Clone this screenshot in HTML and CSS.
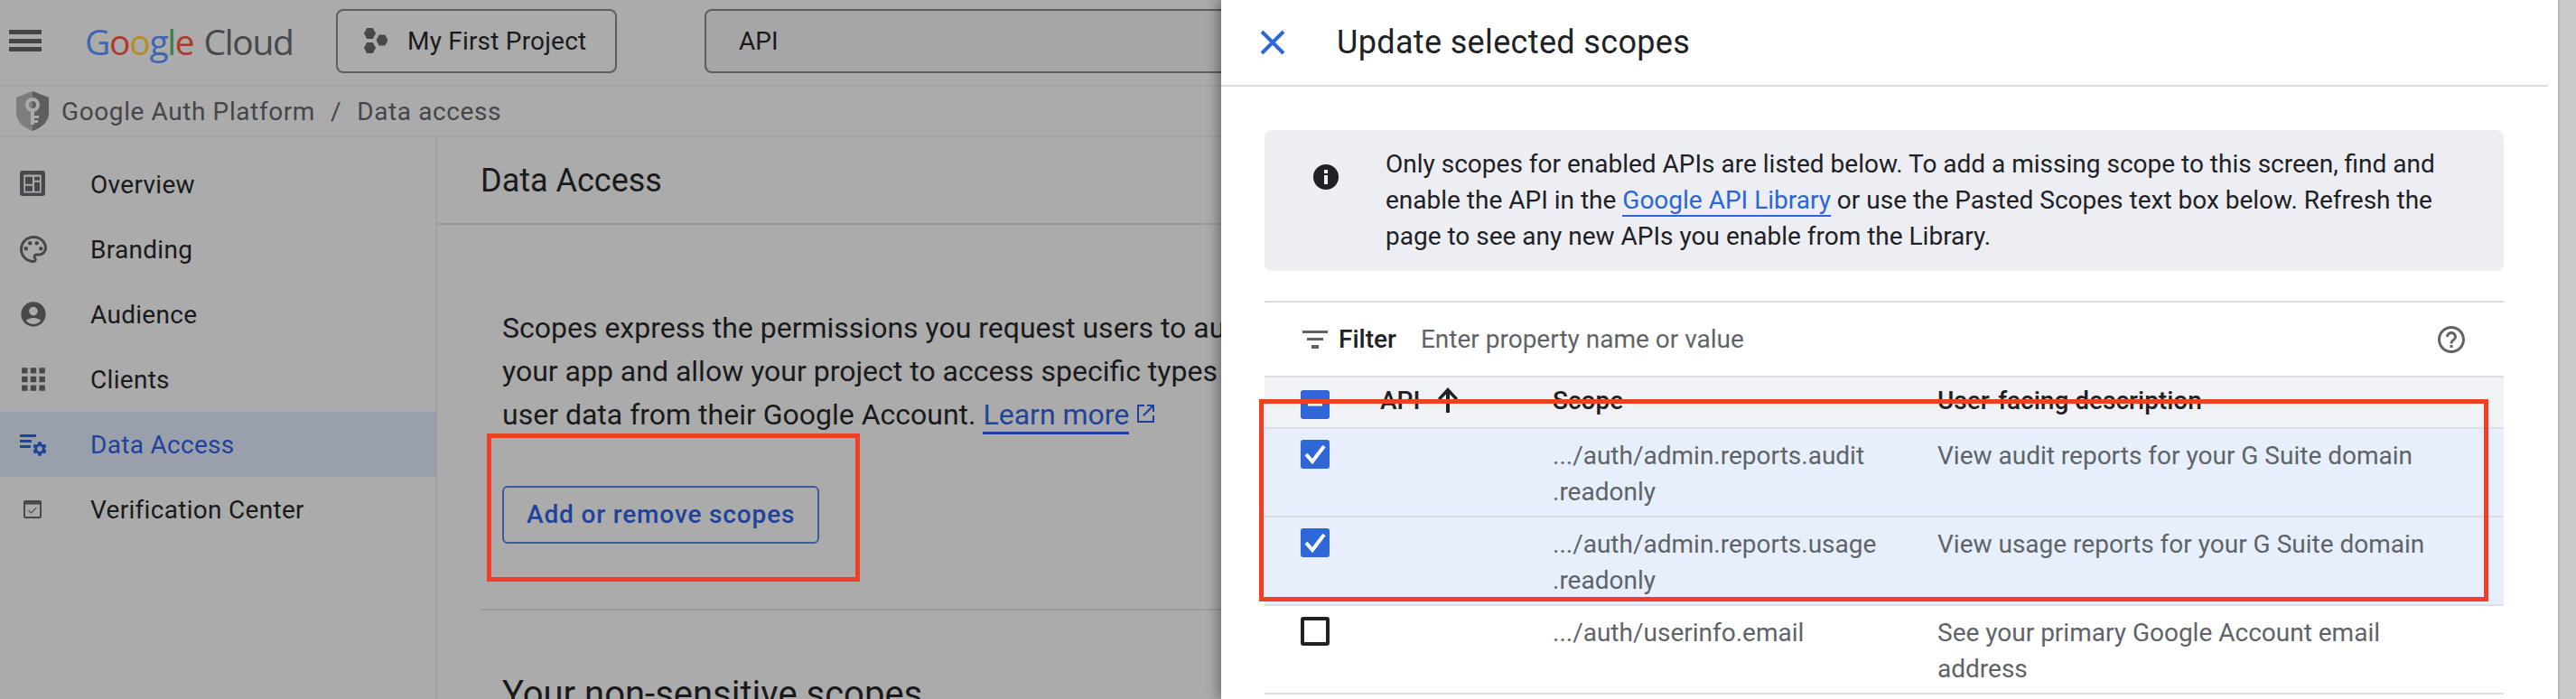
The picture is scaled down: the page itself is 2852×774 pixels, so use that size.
FILE: index.html
```html
<!DOCTYPE html>
<html lang="en">
<head>
    <meta charset="UTF-8">
    <title>Data Access - Google Auth Platform</title>
    <link rel="stylesheet" href="styles.css">
</head>
<body>
    <header class="topbar">
        <svg class="menu-icon" viewBox="0 0 36 24"><path d="M0 0h36v5H0zM0 10h36v5H0zM0 19h36v5H0z"/></svg>
        <div class="logo">
            <span class="logo-google"><span class="g-blue">G</span><span class="g-red">o</span><span class="g-yellow">o</span><span class="g-blue">g</span><span class="g-green">l</span><span class="g-red">e</span></span>
            <span class="logo-cloud">Cloud</span>
        </div>
        <div class="project-btn">
            <svg class="project-icon" viewBox="0 0 26 28"><path d="M3.200 0h6.600l3.200 6-3.200 6H3.200L0 6zM3.200 16h6.600l3.200 6-3.200 6H3.200L0 22zM16.700 7.500h6.600l3.200 6-3.200 6h-6.600l-3.200-6z"/></svg>
            <span>My First Project</span>
        </div>
        <div class="search-box">API</div>
    </header>

    <div class="crumbs">
        <svg class="shield-icon" viewBox="0 0 36 44">
            <path d="M18 0L36 7v17c0 9-7 16-18 20C7 40 0 33 0 24V7z" fill="#7b7d7f"/>
            <path d="M18 0L36 7v17c0 9-7 16-18 20z" fill="#5c5e61"/>
            <circle cx="18" cy="15" r="6" fill="none" stroke="#ababab" stroke-width="4"/>
            <path d="M16 20h4v17h-4zM20 27h5v3h-5zM20 32h4v3h-4z" fill="#ababab"/>
        </svg>
        <span>Google Auth Platform</span>
        <span class="crumb-sep">/</span>
        <span>Data access</span>
    </div>

    <div class="page">
        <nav class="sidebar">
            <a class="nav-item">
                <svg class="nav-icon" viewBox="0 0 30 30"><rect width="28" height="28" rx="3"/><path d="M4.300 4.500h19.400v20H4.300z" fill="#ababab"/><path d="M6 6.700h8v8H6zM16 6.700h6v4h-6zM6 16.700h8v6H6zM16 12.700h6v10h-6z"/></svg>
                Overview
            </a>
            <a class="nav-item">
                <svg class="nav-icon" viewBox="2 2 20 20"><path d="M12 22C6.490 22 2 17.510 2 12S6.490 2 12 2s10 4.040 10 9c0 3.310-2.690 6-6 6h-1.770c-.28 0-.5.22-.5.5 0 .12.05.23.13.33.41.47.64 1.060.64 1.670 0 1.380-1.120 2.500-2.500 2.500zm0-18c-4.410 0-8 3.590-8 8s3.590 8 8 8c.28 0 .5-.22.5-.5 0-.16-.08-.28-.14-.35-.41-.46-.63-1.050-.63-1.650 0-1.380 1.120-2.500 2.500-2.500H16c2.210 0 4-1.790 4-4 0-3.860-3.590-7-8-7z"/><circle cx="6.500" cy="11.500" r="1.500"/><circle cx="9.500" cy="7.500" r="1.500"/><circle cx="14.500" cy="7.500" r="1.500"/><circle cx="17.500" cy="11.500" r="1.500"/></svg>
                Branding
            </a>
            <a class="nav-item">
                <svg class="nav-icon" viewBox="1 1 22 22"><path d="M12 2C6.480 2 2 6.480 2 12s4.480 10 10 10 10-4.480 10-10S17.520 2 12 2zm0 4c1.930 0 3.500 1.570 3.500 3.500S13.930 13 12 13s-3.500-1.570-3.500-3.500S10.070 6 12 6zm0 14c-2.030 0-4.430-.82-6.140-2.880C7.550 15.800 9.680 15 12 15s4.450.8 6.140 2.120C16.430 19.180 14.030 20 12 20z"/></svg>
                Audience
            </a>
            <a class="nav-item">
                <svg class="nav-icon" viewBox="0 0 28 28"><path d="M2 2h6v6H2zM11 2h6v6h-6zM20 2h6v6h-6zM2 11h6v6H2zM11 11h6v6h-6zM20 11h6v6h-6zM2 20h6v6H2zM11 20h6v6h-6zM20 20h6v6h-6z"/></svg>
                Clients
            </a>
            <a class="nav-item active">
                <svg class="nav-icon" viewBox="0 0 30 30"><path d="M0 4h18v3H0zM0 10h13v3H0zM0 16h12v3H0z"/><path transform="translate(12.400 10.400) scale(.8)" d="M19.140 12.940c.04-.3.06-.61.06-.94 0-.32-.02-.64-.07-.94l2.030-1.580c.18-.14.23-.41.12-.61l-1.920-3.320c-.12-.22-.37-.29-.59-.22l-2.390.96c-.5-.38-1.030-.7-1.620-.94l-.36-2.540c-.04-.24-.24-.41-.48-.41h-3.840c-.24 0-.43.17-.47.41l-.36 2.540c-.59.24-1.130.57-1.620.94l-2.390-.96c-.22-.08-.47 0-.59.22L2.740 8.870c-.12.21-.08.47.12.61l2.030 1.580c-.05.3-.09.63-.09.94s.02.64.07.94l-2.030 1.580c-.18.14-.23.41-.12.61l1.920 3.320c.12.22.37.29.59.22l2.390-.96c.5.38 1.030.7 1.620.94l.36 2.540c.05.24.24.41.48.41h3.840c.24 0 .44-.17.47-.41l.36-2.540c.59-.24 1.130-.56 1.620-.94l2.390.96c.22.08.47 0 .59-.22l1.920-3.320c.12-.22.07-.47-.12-.61l-2.010-1.580zM12 15.600c-1.980 0-3.600-1.620-3.600-3.600s1.620-3.600 3.600-3.600 3.600 1.620 3.600 3.600-1.620 3.600-3.600 3.600z"/></svg>
                Data Access
            </a>
            <a class="nav-item">
                <svg class="nav-icon nav-icon-small" viewBox="0 0 20 20"><path fill-rule="evenodd" d="M2 0h16a2 2 0 0 1 2 2v16a2 2 0 0 1-2 2H2a2 2 0 0 1-2-2V2a2 2 0 0 1 2-2zM2 4.500V18h16V4.500z"/><path d="M5.500 11l3 3 6-6" fill="none" stroke="#5b5c60" stroke-width="1.500"/></svg>
                Verification Center
            </a>
        </nav>

        <main class="content">
            <div class="content-title">Data Access</div>
            <section class="scopes-intro">
                <p>Scopes express the permissions you request users to authorize for<br>your app and allow your project to access specific types of private<br>user data from their Google Account. <a class="learn-link">Learn more</a><svg class="ext-icon" viewBox="0 0 20 24"><path d="M2 2h7v2H3v16h15v-6h2v8H1V2zM12 2h8v8h-2V5.500L8.500 15 7 13.500 16.500 4H12z"/></svg></p>
                <div class="outline-btn">Add or remove scopes</div>
            </section>
            <h2 class="scopes-heading">Your non-sensitive scopes</h2>
        </main>
    </div>

    <aside class="drawer">
        <div class="drawer-head">
            <svg class="close-icon" viewBox="0 0 28 28"><path d="M2 2l24 24M26 2L2 26"/></svg>
            <div class="drawer-title">Update selected scopes</div>
        </div>
        <div class="drawer-body">
            <div class="notice">
                <svg class="info-icon" viewBox="0 0 28 28"><path fill-rule="evenodd" d="M14 0a14 14 0 1 1 0 28 14 14 0 0 1 0-28zM12 6v4h4V6zM12 12v10h4V12z"/></svg>
                <p>Only scopes for enabled APIs are listed below. To add a missing scope to this screen, find and<br>enable the API in the <a class="blue-link">Google API Library</a> or use the Pasted Scopes text box below. Refresh the<br>page to see any new APIs you enable from the Library.</p>
            </div>

            <div class="filter-row">
                <svg class="filter-icon" viewBox="0 0 28 20"><path d="M0 0h28v3H0zM5 8h18v3H5zM10 16h8v4h-8z"/></svg>
                <span class="filter-label">Filter</span>
                <span class="filter-hint">Enter property name or value</span>
                <svg class="help-icon" viewBox="0 0 24 24"><path d="M11 18h2v-2h-2v2zm1-16C6.480 2 2 6.480 2 12s4.480 10 10 10 10-4.480 10-10S17.520 2 12 2zm0 18c-4.410 0-8-3.590-8-8s3.590-8 8-8 8 3.590 8 8-3.590 8-8 8zm0-14c-2.210 0-4 1.790-4 4h2c0-1.100.9-2 2-2s2 .9 2 2c0 2-3 1.750-3 5h2c0-2.250 3-2.500 3-5 0-2.210-1.790-4-4-4z"/></svg>
            </div>

            <div class="scope-table">
                <div class="scope-row head-row">
                    <div class="cell-check"><span class="check check-on"><svg viewBox="0 0 32 32"><path d="M8 14.500h16v3H8z" fill="#fff"/></svg></span></div>
                    <div class="cell-api">API <svg class="sort-icon" viewBox="0 0 24 28"><path d="M12 0l11 12-2.500 2.200L14 7.500V28h-4V7.500L3.500 14.200 1 12z"/></svg></div>
                    <div class="cell-scope">Scope</div>
                    <div class="cell-desc">User-facing description</div>
                </div>
                <div class="scope-row selected">
                    <div class="cell-check"><span class="check check-on"><svg viewBox="0 0 32 32"><path d="M6 16l7 8L26 7" fill="none" stroke="#fff" stroke-width="4"/></svg></span></div>
                    <div class="cell-api"></div>
                    <div class="cell-scope">.../auth/admin.reports.audit<br>.readonly</div>
                    <div class="cell-desc">View audit reports for your G Suite domain</div>
                </div>
                <div class="scope-row selected">
                    <div class="cell-check"><span class="check check-on"><svg viewBox="0 0 32 32"><path d="M6 16l7 8L26 7" fill="none" stroke="#fff" stroke-width="4"/></svg></span></div>
                    <div class="cell-api"></div>
                    <div class="cell-scope">.../auth/admin.reports.usage<br>.readonly</div>
                    <div class="cell-desc">View usage reports for your G Suite domain</div>
                </div>
                <div class="scope-row">
                    <div class="cell-check"><span class="check"></span></div>
                    <div class="cell-api"></div>
                    <div class="cell-scope">.../auth/userinfo.email</div>
                    <div class="cell-desc">See your primary Google Account email<br>address</div>
                </div>
            </div>
        </div>
    </aside>

    <div class="scrollbar"></div>

    <div class="mark mark-button"></div>
    <div class="mark mark-rows"></div>
</body>
</html>
```

FILE: styles.css
```css
* {
    box-sizing: border-box;
}

html, body {
    margin: 0;
    height: 774px;
    overflow: hidden;
}

body {
    position: relative;
    background-color: #ababab;
    color: #1a1a1c;
    font-family: Roboto, "Liberation Sans", sans-serif;
    font-size: 28px;
}

/* top bar */
.topbar {
    display: flex;
    align-items: center;
    height: 96px;
    padding: 0 0 4px 10px;
    border-bottom: 2px solid #a3a2a9;
}

.menu-icon {
    width: 36px;
    height: 24px;
    fill: #434447;
}

.logo {
    display: flex;
    align-items: baseline;
    gap: 11px;
    width: 278px;
    margin-left: 48px;
    font-family: "Open Sans", sans-serif;
    font-size: 39px;
    letter-spacing: -1.3px;
}

.g-blue { color: #3d65b3; }
.g-red { color: #ae3a2d; }
.g-yellow { color: #b58e24; }
.g-green { color: #3c8048; }

.logo-cloud {
    color: #47484b;
}

.project-btn {
    display: flex;
    align-items: center;
    gap: 22px;
    width: 311px;
    height: 71px;
    padding-left: 29px;
    border: 2px solid #5b5e63;
    border-radius: 8px;
    letter-spacing: 0.2px;
}

.project-icon {
    width: 26px;
    height: 28px;
    fill: #47484c;
}

.search-box {
    width: 700px;
    height: 71px;
    margin-left: 97px;
    padding-left: 36px;
    background-color: #a6a6a8;
    border: 2px solid #5b5e63;
    border-radius: 8px;
    line-height: 67px;
}

/* breadcrumb */
.crumbs {
    display: flex;
    align-items: center;
    height: 56px;
    padding-left: 18px;
    border-bottom: 2px solid #a3a2a9;
    color: #45464a;
    letter-spacing: 0.6px;
}

.shield-icon {
    width: 36px;
    height: 44px;
    margin-right: 14px;
}

.crumb-sep {
    margin: 0 17px;
}

/* page under the drawer */
.page {
    display: flex;
    height: 622px;
}

.sidebar {
    flex: none;
    width: 484px;
    padding-top: 16px;
    border-right: 2px solid #a0a0a2;
}

.nav-item {
    display: flex;
    align-items: center;
    height: 72px;
    padding-left: 22px;
    letter-spacing: 0.3px;
}

.nav-item.active {
    background-color: #9aa0ab;
    color: #1f439a;
}

.nav-icon {
    flex: none;
    width: 30px;
    height: 30px;
    margin-right: 48px;
    fill: #47484c;
}

.nav-icon-small {
    width: 20px;
    height: 20px;
    margin: 0 54px 0 4px;
}

.active .nav-icon {
    fill: #1f439a;
}

.content {
    flex: 1;
    min-width: 0;
    white-space: nowrap;
}

.content-title {
    height: 97px;
    padding-left: 48px;
    border-bottom: 2px solid #9a9aa0;
    font-size: 36px;
    line-height: 96px;
}

.scopes-intro {
    margin-left: 48px;
    padding: 90px 0 72px 24px;
    border-bottom: 2px solid #9a9aa0;
}

.scopes-intro p {
    margin: 0;
    font-size: 32px;
    line-height: 48px;
}

.learn-link {
    color: #1f439a;
    border-bottom: 3px solid #1f439a;
}

.ext-icon {
    width: 20px;
    height: 24px;
    margin-left: 8px;
    fill: #1f439a;
}

.outline-btn {
    display: inline-block;
    height: 64px;
    margin-top: 55px;
    padding: 0 25px;
    border: 2px solid #3d5b99;
    border-radius: 6px;
    color: #1f439a;
    font-weight: 500;
    letter-spacing: 0.85px;
    line-height: 60px;
}

.scopes-heading {
    margin: 69px 0 0 72px;
    font-size: 40px;
    font-weight: 400;
}

/* drawer */
.drawer {
    position: absolute;
    top: 0;
    left: 1352px;
    width: 1480px;
    height: 774px;
    background-color: #fff;
    box-shadow: -4px 0 12px rgba(0, 0, 0, 0.35);
    color: #202124;
}

.drawer-head {
    display: flex;
    align-items: center;
    height: 96px;
    margin-right: 11px;
    padding-left: 43px;
    border-bottom: 2px solid #dddce2;
}

.close-icon {
    width: 28px;
    height: 28px;
    margin-right: 57px;
    fill: none;
    stroke: #2f66d8;
    stroke-width: 4;
}

.drawer-title {
    font-size: 36px;
    letter-spacing: 0.35px;
}

.drawer-body {
    width: 1372px;
    margin-left: 48px;
    padding-top: 48px;
}

.notice {
    display: flex;
    align-items: flex-start;
    height: 156px;
    padding: 18px 0 0 54px;
    border-radius: 8px;
    background-color: #edeef3;
}

.notice p {
    margin: 0;
    line-height: 40px;
}

.info-icon {
    flex: none;
    width: 28px;
    height: 28px;
    margin: 20px 52px 0 0;
    fill: #202124;
}

.blue-link {
    color: #2a66d6;
    border-bottom: 2px solid #2a66d6;
}

.filter-row {
    display: flex;
    align-items: center;
    height: 83px;
    margin-top: 33px;
    padding: 0 40px 0 42px;
    border-top: 2px solid #dddce2;
}

.filter-icon {
    width: 28px;
    height: 20px;
    margin-right: 12px;
    fill: #5f6368;
}

.filter-label {
    margin-right: 27px;
    font-weight: 500;
}

.filter-hint {
    flex: 1;
    color: #5f6368;
}

.help-icon {
    width: 36px;
    height: 36px;
    fill: #5f6368;
}

/* scope table */
.scope-row {
    display: flex;
    height: 98px;
    padding-top: 10px;
    border-bottom: 2px solid #dddfe3;
    color: #5f6368;
    line-height: 40px;
}

.head-row {
    height: 59px;
    padding-top: 6px;
    border-top: 2px solid #dddce2;
    background-color: #f1f2f5;
    color: #202124;
    font-weight: 500;
}

.head-row .cell-check {
    padding-top: 8px;
}

.selected {
    background-color: #e7effc;
}

.cell-check {
    flex: none;
    width: 128px;
    padding: 2px 0 0 40px;
}

.cell-api {
    flex: none;
    width: 191px;
}

.cell-scope {
    flex: none;
    width: 426px;
}

.check {
    display: block;
    width: 32px;
    height: 32px;
    border: 4px solid #202124;
    border-radius: 3px;
}

.check-on {
    border: 0;
    background-color: #2f66d8;
}

.check svg {
    display: block;
}

.sort-icon {
    width: 24px;
    height: 28px;
    margin-left: 12px;
    vertical-align: -4px;
    fill: #202124;
}

/* page scrollbar */
.scrollbar {
    position: absolute;
    top: 0;
    right: 0;
    width: 20px;
    height: 774px;
    border-left: 2px solid #b8b8b8;
    background-color: #cbcbcb;
}

/* red marks drawn on the screenshot */
.mark {
    position: absolute;
    border: 5px solid #ee4027;
}

.mark-button {
    top: 480px;
    left: 539px;
    width: 413px;
    height: 164px;
}

.mark-rows {
    top: 442px;
    left: 1394px;
    width: 1361px;
    height: 224px;
}
```
